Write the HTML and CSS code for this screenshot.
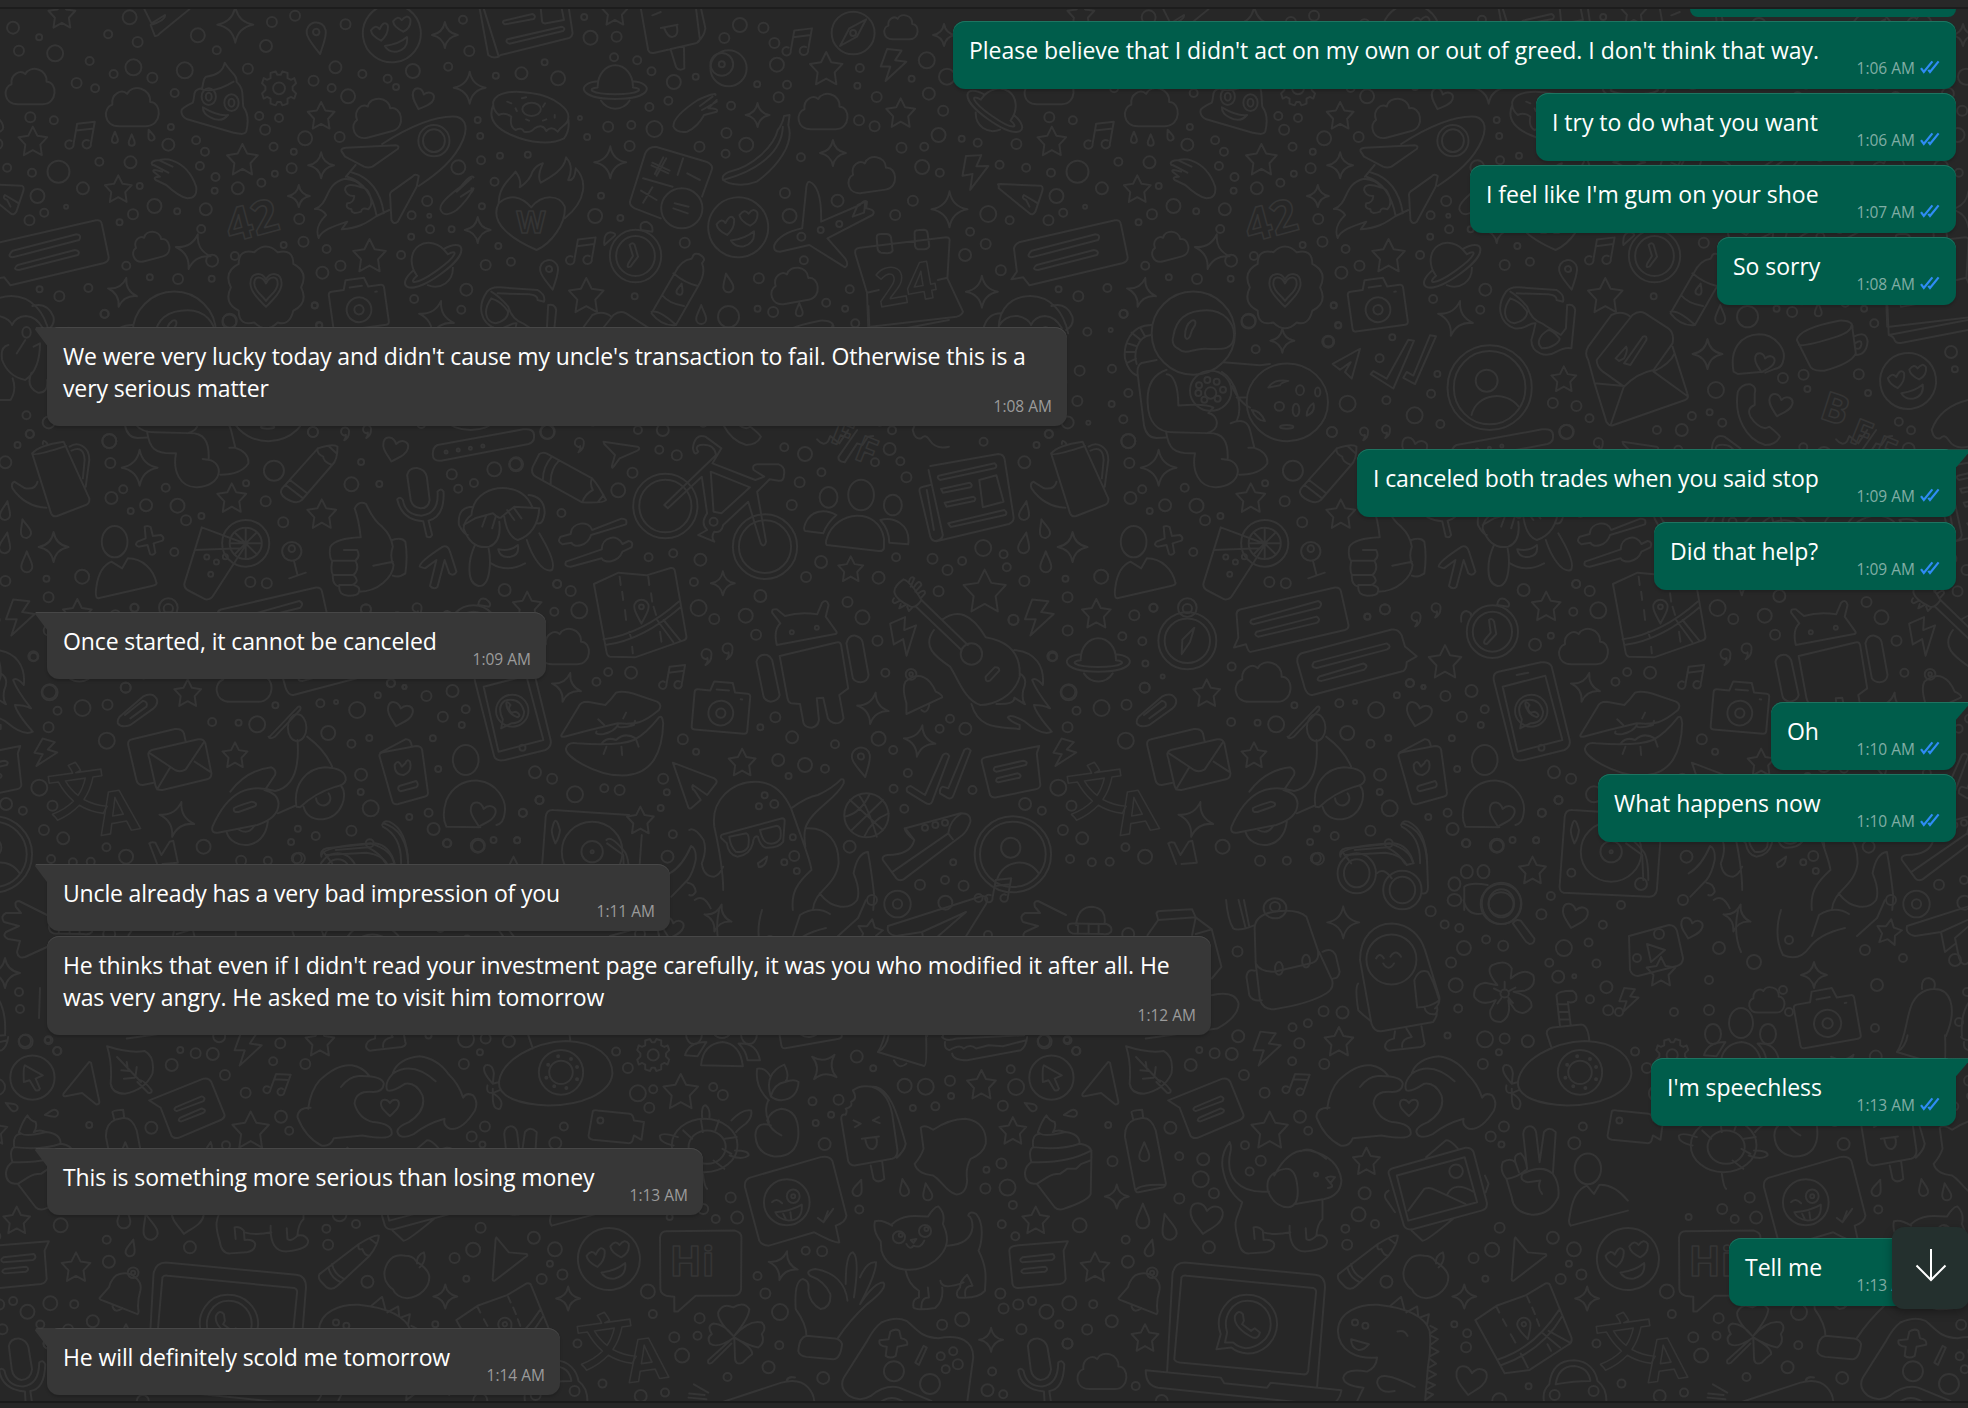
FILE: index.html
```html
<!DOCTYPE html>
<html lang="en">
<head>
    <meta charset="utf-8">
    <title>Chat</title>
    <link rel="stylesheet" href="styles.css">
</head>
<body>
    <div class="top-bar"></div>

    <main class="chat">
        <svg class="wallpaper" width="1968" height="1394" viewBox="0 9 1968 1394" aria-hidden="true">
            <defs>
                <g id="tile"></g>
            </defs>
            <use href="#tile" x="-1019"/>
            <use href="#tile" x="0"/>
            <use href="#tile" x="1019"/>
        </svg>
        <svg class="sprite" width="0" height="0" aria-hidden="true">
            <symbol id="checks" viewBox="0 0 20 14">
                <path d="M1 8.2L3.8 12L12.4 1.4M8.3 9.8L10 12L18.6 1.4"/>
            </symbol>
        </svg>

        <div class="messages">
            <div class="message out cut"><div class="bubble"></div></div>
            <div class="message out">
                <div class="bubble w1"><span class="text">Please believe that I didn't act on my own or out of greed. I don't think that way.</span><span class="meta">1:06 AM<svg class="ticks"><use href="#checks"/></svg></span></div>
            </div>
            <div class="message out">
                <div class="bubble w2"><span class="text">I try to do what you want</span><span class="meta">1:06 AM<svg class="ticks"><use href="#checks"/></svg></span></div>
            </div>
            <div class="message out">
                <div class="bubble w3"><span class="text">I feel like I'm gum on your shoe</span><span class="meta">1:07 AM<svg class="ticks"><use href="#checks"/></svg></span></div>
            </div>
            <div class="message out">
                <div class="bubble w4"><span class="text">So sorry</span><span class="meta">1:08 AM<svg class="ticks"><use href="#checks"/></svg></span></div>
            </div>
            <div class="message in first">
                <div class="bubble long w5"><span class="text">We were very lucky today and didn't cause my uncle's transaction to fail. Otherwise this is a<br>very serious matter</span><span class="meta">1:08 AM</span></div>
            </div>
            <div class="message out first">
                <div class="bubble w6"><span class="text">I canceled both trades when you said stop</span><span class="meta">1:09 AM<svg class="ticks"><use href="#checks"/></svg></span></div>
            </div>
            <div class="message out">
                <div class="bubble w7"><span class="text">Did that help?</span><span class="meta">1:09 AM<svg class="ticks"><use href="#checks"/></svg></span></div>
            </div>
            <div class="message in first">
                <div class="bubble w8"><span class="text">Once started, it cannot be canceled</span><span class="meta">1:09 AM</span></div>
            </div>
            <div class="message out first">
                <div class="bubble w9"><span class="text">Oh</span><span class="meta">1:10 AM<svg class="ticks"><use href="#checks"/></svg></span></div>
            </div>
            <div class="message out">
                <div class="bubble w10"><span class="text">What happens now</span><span class="meta">1:10 AM<svg class="ticks"><use href="#checks"/></svg></span></div>
            </div>
            <div class="message in first">
                <div class="bubble w11"><span class="text">Uncle already has a very bad impression of you</span><span class="meta">1:11 AM</span></div>
            </div>
            <div class="message in">
                <div class="bubble long w12"><span class="text">He thinks that even if I didn't read your investment page carefully, it was you who modified it after all. He<br>was very angry. He asked me to visit him tomorrow</span><span class="meta">1:12 AM</span></div>
            </div>
            <div class="message out first">
                <div class="bubble w13"><span class="text">I'm speechless</span><span class="meta">1:13 AM<svg class="ticks"><use href="#checks"/></svg></span></div>
            </div>
            <div class="message in first">
                <div class="bubble w14"><span class="text">This is something more serious than losing money</span><span class="meta">1:13 AM</span></div>
            </div>
            <div class="message out first">
                <div class="bubble w15"><span class="text">Tell me</span><span class="meta">1:13 AM<svg class="ticks"><use href="#checks"/></svg></span></div>
            </div>
            <div class="message in first">
                <div class="bubble w16"><span class="text">He will definitely scold me tomorrow</span><span class="meta">1:14 AM</span></div>
            </div>
        </div>

        <button class="scroll-down" aria-label="Scroll to bottom">
            <svg width="34" height="36" viewBox="0 0 34 36"><path d="M17 2V33M2.5 18.5L17 33L31.5 18.5"/></svg>
        </button>
    </main>

    <script src="wallpaper.js"></script>
</body>
</html>
```
FILE: styles.css
```css
* {
    box-sizing: border-box;
}

body {
    margin: 0;
    width: 1968px;
    height: 1408px;
    overflow: hidden;
    background: #272727;
    font-family: "Open Sans", "Noto Sans", sans-serif;
    color: #fff;
}

.top-bar {
    height: 9px;
    background: #282828;
    border-bottom: 2px solid #1d1d1d;
}

.chat {
    position: relative;
    height: 1394px;
    overflow: hidden;
    background: #272727;
    border-bottom: 2px solid #1b1b1b;
}

/* doodle wallpaper */
.wallpaper {
    position: absolute;
    top: 0;
    left: 0;
    fill: none;
    stroke: #353535;
    stroke-width: 2;
    stroke-linecap: round;
    stroke-linejoin: round;
}

.wallpaper path,
.wallpaper ellipse {
    vector-effect: non-scaling-stroke;
}

.wallpaper text {
    font-family: "Open Sans", "Noto Sans CJK SC", sans-serif;
    font-weight: 700;
    text-anchor: middle;
    stroke-width: 1.6;
}

.sprite {
    position: absolute;
}

/* messages */
.messages {
    position: relative;
    display: flex;
    flex-direction: column;
    padding: 0 12px 0 47px;
}

.message {
    display: flex;
    padding-bottom: 4.1px;
}

.message.first {
    margin-top: 18px;
}

.out {
    justify-content: flex-end;
}

.bubble {
    position: relative;
    display: grid;
    height: 68px;
    padding: 13px 15px 0;
    border-radius: 12px;
    background: #005d4b;
    box-shadow: inset 0 1px #1e7461, 0 2px 3px rgba(0, 0, 0, .18);
}

.in .bubble {
    height: 67px;
    margin-bottom: 1px;
    background: #373737;
    box-shadow: inset 0 1px #474747, 0 2px 3px rgba(0, 0, 0, .18);
}

.in .bubble.long {
    height: 99px;
}

.cut {
    height: 12px;
}

.cut .bubble {
    width: 266px;
    height: 8px;
    padding: 0;
    border-radius: 0 0 12px 12px;
    box-shadow: none;
}

.text {
    grid-area: 1 / 1;
    padding-left: 1px;
    font-size: 23px;
    line-height: 32px;
    letter-spacing: -.03px;
    white-space: nowrap;
}

.in .text {
    letter-spacing: -.12px;
}

.meta {
    grid-area: 1 / 1;
    display: flex;
    justify-self: end;
    margin-top: 22px;
    font-size: 15.5px;
    line-height: 24px;
    white-space: nowrap;
    color: #80aea5;
}

.in .meta {
    color: #9b9b9b;
}

.long .meta {
    margin-top: 54px;
}

.ticks {
    width: 20px;
    height: 14px;
    margin: 4px 1px 0 5px;
    fill: none;
    stroke: #2f8cf5;
    stroke-width: 2.2;
}

/* bubble tails */
.first .bubble::before {
    content: "";
    position: absolute;
    top: 0;
    width: 24px;
    height: 18px;
}

.in.first .bubble::before {
    left: -12px;
    background: linear-gradient(#474747 1px, #373737 1px);
    clip-path: polygon(1px 0, 24px 0, 24px 14px, 12px 18px, 0 2px);
}

.out.first .bubble::before {
    right: -12px;
    background: linear-gradient(#1e7461 1px, #005d4b 1px);
    clip-path: polygon(0 0, 24px 0, 24px 4px, 12px 18px, 0 14px);
}

.w15::before {
    display: none;
}

/* bubble widths */
.w1 { width: 1003px; }
.w2 { width: 420px; }
.w3 { width: 486px; }
.w4 { width: 239px; }
.w5 { width: 1020px; }
.w6 { width: 599px; }
.w7 { width: 302px; }
.w8 { width: 499px; }
.w9 { width: 185px; }
.w10 { width: 358px; }
.w11 { width: 623px; }
.w12 { width: 1164px; }
.w13 { width: 305px; }
.w14 { width: 656px; }
.w15 { width: 227px; }
.w16 { width: 513px; }

.w11 .text {
    letter-spacing: -.17px;
}

.w6 .text {
    letter-spacing: -.12px;
}

.scroll-down {
    position: absolute;
    top: 1218px;
    right: -1px;
    width: 77px;
    height: 82px;
    padding: 0 0 4px;
    border: none;
    border-radius: 12px;
    background: #24302e;
    box-shadow: 0 3px 10px rgba(0, 0, 0, .3);
}

.scroll-down path {
    fill: none;
    stroke: #fff;
    stroke-width: 2;
}
```
FILE: wallpaper.js
```js
// small doodles, drawn in a -10..10 box
const shapes = {
    star: "M0-10L3-4L9.6-3L5 2L6 9L0 5.6L-6 9L-5 2L-9.6-3L-3-4Z",
    spark: "M0-10Q1.5-1.5 10 0Q1.5 1.5 0 10Q-1.5 1.5-10 0Q-1.5-1.5 0-10Z",
    cloud: "M-5 7C-11 7-11 0-7.500-1C-8-5-4-7-2-5C0-9 7-7 6.500-2C11-2 11 7 5 7Z",
    heart: "M0 9C-4 5-9 2-9-3C-9-8-3-9 0-4C3-9 9-8 9-3C9 2 4 5 0 9Z",
    note: "M-4 6V-6L6-9V4M-4-2L6-5M-4 6A2.500 2.500 0 1 1-5.500 4.500M6 4A2.500 2.500 0 1 1 4.500 2.500",
    saturn: "M-5.500-1A5.500 6.500 0 0 1 5.500-1M-4.500 3.500A5.500 6 0 0 0 4.500 3.500M-5.500-2.500C-12-2-12 3 0 3C12 3 12-2 5.500-2.500M-5.500-.6C-9-.3-8 1.500 0 1.500C8 1.500 9-.3 5.500-.6",
    drop: "M0-10C2-4 5 0 5 4A5 5 0 0 1-5 4C-5 0-2-4 0-10Z",
    bolt: "M-4-10L5-9L1-3L8-2L-5 10L-2 1L-8 1Z",
    pin: "M0 10C-3 4-6 0-6-4A6 6 0 0 1 6-4C6 0 3 4 0 10ZM2-4A2 2 0 1 1-2-4A2 2 0 1 1 2-4",
    gear: "M-2-10L-1-8H1L2-10L5-9L5-6L7-5L9-6L10-3L8-1V1L10 3L9 6L7 5L5 6L5 9L2 10L1 8H-1L-2 10L-5 9L-5 6L-7 5L-9 6L-10 3L-8 1V-1L-10-3L-9-6L-7-5L-5-6L-5-9ZM3.500 0A3.500 3.500 0 1 1-3.500 0A3.500 3.500 0 1 1 3.500 0",
    camera: "M-8-6H-4L-3-9H3L4-6H8Q9-6 9-5V6Q9 7 8 7H-8Q-9 7-9 6V-5Q-9-6-8-6ZM4 1A4 4 0 1 1-4 1A4 4 0 1 1 4 1M1.500 1A1.500 1.500 0 1 1-1.500 1A1.500 1.500 0 1 1 1.500 1M-2-6.500H2M6-4H6.500",
    smile: "M10 0A10 10 0 1 1-10 0A10 10 0 1 1 10 0M-4 2Q-7 0-7-2Q-5-4-4-2Q-2-5-1-3Q-1 0-4 2M4 0Q1-2 1-4Q3-6 4-4Q6-6 7-4Q7-1 4 0M-3 4Q2 4 5 2Q5 6 1 6.500Q-2 6.500-3 4Z",
    quote: "M5 0A5 5 0 1 0-1 4Q1 4 1 3Q2 7-1 10Q5 7 5 0Z",
    badge: "M-3-9Q0-12 3-9Q7-10 7-6Q11-4 9 0Q11 4 7 6Q6 10 3 9Q0 12-3 9Q-7 10-7 6Q-11 4-9 0Q-11-4-7-6Q-7-10-3-9ZM0 5C-2 3-4 1-4-1C-4-4-1-4 0-2C1-4 4-4 4-1C4 1 2 3 0 5M0 3.500C-1 2-3 1-3-1C-3-3-1-3 0-1C1-3 3-3 3-1C3 1 1 2 0 3.500"
};

// at: left, top and the scale of the sheet each part was traced on
const sheets = [
    {
        at: [0, 0, 2.376, 3],
        dots: "31 83 6,93 112 3,45 152 5,131 160 8,213 183 4,257 103 4,308 52 7,327 126 5,317 202 8,270 222 4,362 233 5,182 249 5,226 265 4,72 352 5,128 361 4,439 211 8,415 279 4,406 381 3,400 434 6,466 421 4,487 455 4,475 498 4,470 106 7,515 151 4,512 531 4,510 572 3,565 565 6,621 548 4,653 521 3,693 505 5,650 440 4,698 455 3,725 415 7,630 389 5,616 348 4,663 354 4,589 206 5,646 66 5,632 138 6,701 47 5,821 73 5,797 202 6,745 242 5,788 264 4,827 289 7,861 222 4,921 236 4,941 261 3,981 213 7,1065 200 4,1115 153 5,1100 59 4,1178 227 3,1239 220 6,1326 235 7,1294 187 3,1135 360 3,1141 408 3,1188 467 3,1143 481 4,1254 464 3,1089 502 7,1175 545 4,1145 619 3,1015 603 5,978 646 4,1020 647 2,1022 688 4,1073 688 3,1184 738 3,977 710 3,953 765 4,809 797 5,766 818 6,776 747 4,721 725 5,674 735 3,711 657 5,807 411 5,1154 795 5,1214 785 4,984 897 4,1108 869 6,1096 929 4,748 916 3,546 962 7,503 836 3,558 768 4,504 782 6,423 837 5,356 832 3,300 797 4,316 643 5,367 618 7,421 634 3,489 628 6,478 687 4,284 667 3,332 558 3,310 487 6,236 485 4,197 565 6,139 515 11,76 518 4,17 503 4,89 588 7,105 638 4,157 620 2,70 661 5,94 868 3,141 889 5,210 864 4,249 941 4,758 975 3",
        marks: "star 147 45 14,star 78 425 15,star 281 568 14,star 576 480 16,star 763 348 14,star 878 768 17,spark 559 74 18,spark 1057 105 13,spark 1116 263 16,spark 763 496 13,spark 710 588 11,spark 459 755 18 15,spark 291 877 15 15,spark 1135 690 13,spark 1037 955 18 15,cloud 72 260 25,cloud 315 322 27,cloud 893 352 25 -15,cloud 357 738 19 -15,drop 273 413 6,drop 313 421 6,drop 358 406 6 -20,pin 754 115 16 -10,smile 931 100 29 -8,heart 1003 297 12 20,note 195 405 17 10,gear 663 265 17,saturn 1030 800 34 -35,camera 852 920 31 -8,badge 632 862 39",
        ovals: "496 290 17 25,496 290 7 12,550 308 17 25,550 308 7 12,1031 422 37 47,1031 422 26 34,1263 328 22 20,63 997 10 16",
        lines: [
            "M534 188C545 215 565 225 562 245C580 265 575 285 578 320C590 340 590 370 585 395C580 405 570 402 555 398L445 358C430 350 428 330 435 325C445 315 455 310 458 308C465 285 455 270 480 265C485 240 483 235 490 230C515 225 530 215 534 188ZM480 268Q510 280 555 245M482 322Q520 350 542 345Q525 370 500 352Q482 342 482 322Z",
            "M908 432C960 390 1030 345 1085 350C1110 358 1110 390 1100 420C1080 480 1040 520 995 558M812 455Q808 445 822 443L940 436Q950 437 945 447L885 500Q875 505 865 500L820 470ZM845 495L822 530M835 517Q900 540 912 640M825 530Q880 550 895 648L925 630M995 528Q985 520 980 530L930 575Q925 580 927 590L930 660Q935 675 945 665L990 560Z",
            "M895 648C870 670 850 685 812 688L825 665C790 680 765 690 757 714C750 690 755 670 775 645Q765 625 748 627C785 610 770 550 820 536Q850 540 860 560M858 562Q820 545 820 570Q825 590 842 588Q840 610 825 610Q820 625 835 628Q835 645 858 635Q860 620 875 628Q890 610 875 575Q870 565 858 562",
            "M1275 750C1220 720 1160 670 1185 610C1210 580 1240 590 1262 622C1290 580 1330 585 1342 620C1345 670 1310 730 1275 750ZM1185 610C1185 560 1210 540 1225 515Q1240 540 1235 562Q1260 540 1265 515Q1275 495 1290 490Q1275 530 1285 548C1310 530 1340 510 1345 472Q1365 500 1350 540Q1365 545 1368 505C1395 540 1395 600 1342 655",
            "M362 495Q355 482 380 480Q395 475 410 482Q450 500 466 560Q470 595 445 595Q425 590 395 555L370 540Q362 530 380 530L365 515Q360 505 385 515M380 482L410 500M365 495L400 518M1125 532Q1120 520 1095 560Q1040 610 1047 630Q1055 655 1085 630Q1110 600 1118 580Q1130 565 1120 565M1120 535L1085 575M1125 565L1095 590",
            "M1172 305C1180 275 1220 270 1265 280C1320 290 1355 330 1350 355C1350 375 1335 375 1325 395Q1310 375 1298 393Q1290 370 1270 385Q1260 400 1245 395Q1240 380 1225 390Q1210 380 1215 350Q1200 335 1185 345Q1170 330 1172 305ZM1172 315C1160 350 1170 380 1215 405C1260 430 1310 435 1340 415Q1355 390 1350 355M1205 305L1215 310M1240 295L1250 292M1295 310L1290 320M1318 345V353M1290 362L1298 358M1250 358L1257 362M1225 325L1228 333",
            "M0 727L228 661Q240 658 242 672L258 770Q260 785 245 790L25 856L10 832L-18 838L-5 815L-12 745Q-10 733 0 727ZM30 752L182 703Q195 705 188 720L30 772Q15 770 30 752ZM42 795L178 750Q192 753 185 765L45 810Q28 808 42 795Z",
            "M343 28L360 70L392 45Q395 60 358 75L368 108Q375 110 380 100L450 28M1140 28L1160 165Q1175 180 1190 165L1350 115Q1362 110 1360 95L1352 28M1150 28L1185 170M1197 62L1265 42Q1275 48 1268 57L1200 73Q1192 68 1197 62ZM1205 118L1335 80Q1345 85 1338 93L1210 131Q1200 127 1205 118ZM1285 28L1288 65Q1290 72 1298 70L1340 60L1335 28",
            "M20 1035Q0 1040 5 1080Q20 1130 60 1140Q95 1110 95 1030L80 1040M60 1020L40 1060M75 1118Q60 1160 90 1178Q115 1180 112 1140M30 1135Q40 1170 25 1200L0 1200"
        ]
    },
    {
        at: [500, 0, 2.376, 3],
        dots: "200 51 3,215 113 7,277 110 5,271 172 4,326 181 4,360 214 4,413 246 7,465 230 3,190 354 2,257 380 5,312 375 4,367 387 8,207 411 3,308 438 5,400 302 4,355 321 4,474 440 5,536 461 4,585 434 7,538 399 5,549 317 4,611 253 3,533 114 5,570 75 7,626 83 5,652 129 5,658 194 7,682 254 4,662 292 5,855 204 4,849 257 3,978 236 3,1014 181 8,1062 230 8,895 291 5,853 361 5,890 379 5,1019 281 6,1053 332 5,1042 405 7,1097 416 3,1135 428 4,1227 432 5,954 443 5,1008 440 4,1003 501 7,1045 518 4,1187 494 4,715 472 4,981 602 5,939 645 5,802 602 6,677 579 5,688 648 7,762 690 3,806 672 3,716 710 4,722 781 4,615 835 5,649 936 5,612 926 3,775 908 4,820 926 3,831 868 4,844 970 4,1105 765 6,1154 732 5,1117 695 4,1160 642 8,1211 661 4,1190 811 5,439 728 5,320 889 3,286 654 3,226 648 7,240 587 3,527 193 3",
        marks: "star 775 207 17,star 952 340 15,star 205 888 18,star 273 36 14,spark 262 487 16,spark 612 345 12,spark 791 459 13,spark 1068 628 18,spark 1145 875 16,spark 1055 105 11,cloud 953 82 17,cloud 768 335 25,cloud 882 524 24 -8,cloud 698 856 24 -10,note 711 125 17 10,note 197 752 17 10,bolt 935 195 16,bolt 1130 515 17 -10,saturn 274 268 32,saturn 1175 335 33 35,smile 566 682 30 -8,pin 119 825 15 -10,drop 428 868 6 15,drop 541 850 10 -10,drop 478 945 10,drop 711 930 7",
        ovals: "839 99 51 64,839 99 7 9,543 205 43 54,527 193 27 34,432 625 49 60,322 768 61 79,322 768 46 60,543 950 25 32",
        lines: [
            "M870 58L848 110L808 138L830 85ZM335 28L352 150Q355 162 368 158L465 130Q478 125 474 110L466 28M478 28L488 85Q485 110 470 125M405 147L418 200Q425 215 438 205L437 138M382 84L422 74M390 84Q400 115 412 110Q425 105 420 78M362 46L382 36",
            "M512 285Q515 275 470 300Q410 350 412 380Q420 400 445 395Q470 380 485 345L515 335Q520 325 495 325L515 300M505 290L475 318M515 305L480 330M675 348L688 345L685 375C700 430 660 500 610 545C580 560 545 555 530 540Q525 525 545 515C600 500 650 440 660 390Q670 375 675 348ZM672 380C670 450 620 510 530 540",
            "M370 440L490 485Q508 495 503 510L480 590M382 655L320 625Q305 615 310 600L345 460Q352 440 370 440M362 488L403 512M395 475L372 527M335 572L372 600M362 562L340 608M445 520L475 540M435 475L422 525M340 535L410 560M415 610L448 620M412 625L446 640M360 496L400 520M388 472L368 522",
            "M735 545Q765 560 763 665L855 615Q865 598 872 605L870 625Q895 630 885 645L778 715L820 775Q830 795 820 802L735 735L665 755Q648 755 652 735Q665 700 718 685L728 560Q730 545 735 545M838 650L850 615L868 605L865 638Z",
            "M845 765Q840 745 855 743L1060 712Q1070 712 1068 725L1063 835L1100 935Q1098 945 1085 950L880 980M845 765L872 878L875 980M872 878L900 870M1040 840L1063 833M895 712Q895 702 905 702L920 702Q928 704 929 712L933 752Q930 760 920 760L905 758Q898 755 897 745ZM985 698Q985 690 995 690L1008 689Q1015 690 1016 700L1020 738Q1018 747 1008 748L993 748Q987 745 986 738Z",
            "M308 735Q315 725 320 735L328 770L310 800Q300 805 305 790L316 768ZM335 690Q330 665 348 665Q365 675 362 695ZM248 735Q245 700 262 697Q278 700 272 708ZM458 770Q460 758 472 762Q485 770 485 780L480 790Q490 820 470 860L418 975Q385 980 360 940L415 820Q430 780 455 776ZM412 820Q440 850 470 858M385 885Q400 910 437 918M360 935Q380 930 418 975",
            "M1185 555Q1180 552 1190 552L1285 557Q1292 560 1288 575L1272 635Q1265 648 1258 640L1185 565ZM1275 608L1245 585Q1238 595 1250 600L1258 620M1185 985C1185 920 1220 888 1260 888C1310 888 1340 940 1350 1000M1185 978Q1200 945 1230 948Q1255 955 1262 975Q1270 950 1295 948Q1320 950 1335 985M1310 918Q1345 905 1360 950Q1365 975 1345 990M1190 940Q1160 940 1150 980"
        ]
    },
    {
        at: [289, 0, 2.373, 3],
        dots: "48 1025 6,200 1012 3,170 1075 4,307 1122 3,292 1181 4,186 1201 4,94 1211 8,253 1246 8,314 1272 4,57 1296 5,581 1209 5,637 1218 5,668 1255 4,614 1295 7,968 1170 8,1127 1134 5,1176 1124 5,1185 1167 3,1307 1123 5,1329 1179 3,1402 1265 4,1431 1291 4,911 1248 4,953 1237 3,983 1268 4,887 1290 6,828 1290 4,1526 1056 6,1535 1108 3",
        marks: "star 607 1138 13,spark 948 1062 15,heart 1082 1088 11 15,heart 1120 1215 13 15,smile 1424 1143 28 -8",
        ovals: "431 1163 100 127,431 1163 85 110,424 1142 26 33",
        lines: [
            "M470 875Q480 860 500 862L590 870Q610 885 605 905L590 900Q590 885 570 883L495 880M470 875C445 920 455 970 490 985C520 990 525 965 540 970Q535 1000 530 1020C530 1060 565 1075 590 1055Q610 1040 625 1045L634 930Q630 910 615 915L612 985L600 1005Q560 975 555 970Q530 960 520 920Q500 890 480 875M480 895C460 930 465 965 490 970Q520 960 520 935Q505 905 480 895ZM570 990C550 1005 540 1030 555 1045C580 1045 598 1025 597 1015Q580 990 570 990Z",
            "M388 1245C400 1180 470 1170 500 1220M685 1080L770 945Q785 930 800 940L855 985Q870 1000 865 1030L820 1110Q780 1120 750 1160L700 1115Q685 1100 685 1080ZM720 945Q745 930 765 950M720 945L665 1040Q655 1060 665 1080L680 1150L750 1158L718 1275M680 1150L708 1265Q715 1280 725 1275L895 1200Q905 1195 900 1180L865 1040M820 1115L900 1188M820 1115Q860 1090 870 1060M730 1075L755 1040Q760 1050 750 1075L738 1083ZM750 1090L795 1010Q805 1005 803 1020L765 1095Z",
            "M1160 1020Q1165 985 1260 962Q1295 960 1292 985L1300 1060Q1290 1090 1225 1112Q1195 1115 1190 1095ZM1165 1035Q1180 1040 1255 1010Q1290 995 1290 975M1295 1010Q1325 990 1328 1025Q1325 1065 1300 1065M1298 1030Q1315 1015 1313 1035Q1310 1050 1300 1045M1010 1115C1000 1050 1025 1005 1070 1003C1110 1003 1135 1050 1128 1080Q1125 1105 1105 1108L1085 1118M1010 1115L1020 1122L1080 1115",
            "M1020 1175Q1030 1150 1050 1153Q1065 1160 1060 1180L1060 1215Q1040 1225 1050 1250Q1065 1280 1085 1285L1095 1280Q1115 1300 1120 1310Q1110 1335 1085 1335C1040 1320 1010 1250 1020 1175ZM1566 1200Q1500 1220 1480 1290Q1485 1320 1500 1315Q1510 1300 1520 1320Q1535 1350 1566 1340M1375 918L1378 1005L1566 960M1378 1005Q1390 1010 1392 1020Q1395 1032 1410 1028L1566 990"
        ]
    },
    {
        at: [-59, 180, 3, 2.24],
        dots: "359 427 5,456 423 4,352 495 5,505 477 4,455 502 3,490 536 4,323 543 6,385 544 2,505 585 7,266 569 4,382 340 4,452 336 2,490 300 4,865 317 7,887 379 4,1105 362 5,1135 326 3,1121 281 3,523 975 5,581 958 4,487 1022 4,547 1033 4,277 1067 5,556 1083 3,608 1112 2,815 1090 4,1222 978 3,1275 962 5,323 1009 5,160 985 5,325 1147 7,554 1137 5,717 460 3,742 448 3,770 452 3,789 470 3,773 490 3,733 492 3,715 477 3",
        marks: "spark 967 360 12,star 409 972 15,bolt 238 980 18,saturn 415 1080 32,cloud 910 1125 28,star 740 1150 14,star 1455 1080 17,quote 1212 565 8,quote 1278 560 8,quote 1368 980 9,quote 1428 960 9",
        ovals: "700 343 125 93,752 472 62 45,752 477 17 13,982 498 122 87,1020 471 12 11,958 507 14 10,1008 515 10 14,980 553 20 4,1073 475 8 10,682 1032 87 64,682 1032 68 50,682 958 28 21,682 960 14 10",
        lines: [
            "M640 350C650 300 700 292 740 292C790 292 825 320 822 350C820 380 790 380 740 378C700 375 680 395 655 378Q632 370 640 350ZM675 350Q675 325 695 315Q710 312 705 325Q695 335 690 350Q680 362 675 350Z",
            "M575 325C510 325 490 370 495 400Q505 430 530 438M573 347C530 350 520 390 530 412M495 385H525M500 365L528 372M515 342L540 357M540 330L555 350M500 410L528 400M590 403L545 410Q530 415 533 435L552 550Q560 578 590 578L618 577M620 425C580 435 560 460 563 500C565 540 590 565 640 565L740 567Q775 560 770 540Q765 525 745 522L760 510Q740 500 655 505M655 505C655 460 640 435 620 435",
            "M618 563C625 600 640 615 705 612C695 650 715 690 770 688C840 685 850 640 810 628L785 625M740 567C790 565 805 585 803 625M785 430C830 450 850 510 830 540L812 545Q860 530 870 560L883 600Q925 610 922 635Q900 660 838 660M865 600L883 600M790 408L900 415L930 412M830 487L860 487M815 462Q840 500 870 510M925 465Q940 445 985 450Q960 455 960 460ZM875 515Q900 515 915 540Q890 540 875 515ZM1040 528Q1040 510 1060 500Q1068 520 1040 528Z",
            "M1118 412L1200 378L1175 445L1155 430L1172 408L1140 425ZM1240 428L1280 445L1345 358L1362 360L1300 467L1232 435ZM1340 430L1360 438L1410 348L1428 350L1365 457L1330 443ZM703 1003L690 1035L665 1062L667 1030Z",
            "M830 975Q828 965 840 962L1125 913Q1140 912 1143 922L1165 995Q1168 1005 1155 1008L872 1057Q865 1058 858 1040L822 1047L835 1025ZM875 985L1075 943Q1090 948 1078 958L880 995Q865 992 875 985ZM890 1012L1070 978Q1085 985 1070 992L895 1023Q880 1020 890 1012Z",
            "M1012 1080Q1010 1065 1025 1060L1295 1007Q1315 1005 1325 1020L1335 1045L1370 1067L1340 1080Q1340 1095 1330 1100L1060 1153Q1045 1157 1035 1140ZM1062 1080L1280 1038Q1298 1045 1280 1052L1070 1093Q1050 1092 1062 1080ZM1078 1112L1210 1083Q1228 1088 1212 1097L1085 1122Q1065 1122 1078 1112Z"
        ]
    },
    {
        at: [0, 410, 2.8, 3],
        dots: "74 16 4,84 72 4,49 105 3,306 93 7,309 159 5,15 157 6,345 238 4,312 264 6,409 286 6,366 303 3,464 233 4,497 287 7,521 331 5,564 318 3,689 220 3,744 274 5,793 337 5,767 182 10,984 223 7,1062 222 3,1011 156 3,876 66 5,1265 193 5,1283 236 4,1327 219 4,1384 178 7,1445 163 7,1532 66 7,488 426 4,230 500 7,130 506 3,136 562 5,15 513 5,701 516 5,747 520 5,376 593 4,1413 540 6,1560 522 4,139 847 8,231 894 8,161 902 4,301 884 5,352 833 5,94 740 4,136 952 5,299 992 8,110 1133 8,147 1187 5,64 1202 4,17 1182 6,123 1260 5,177 1285 6,298 1312 4,353 1340 7,143 1347 4,570 1310 7,594 936 4,668 938 3,720 943 8,771 886 3,897 880 4,941 876 2,1000 900 8,919 969 7,984 1001 4,1034 984 3,1058 856 3,1133 831 2,1094 820 4,1194 858 5,1267 843 6,1304 898 4,1240 920 5,1293 945 3,1212 985 3,1227 1077 3,1011 1094 6,1010 1146 3,1038 1195 8,1146 1221 3,1200 1208 4,1214 1257 6,1251 1300 4,1338 1307 7,1382 1290 3,1448 1291 3,1464 1208 4,1498 1087 6,1546 1106 5,1510 1170 4,984 1262 5,884 1278 4,834 1256 3,815 1296 3,837 1346 6,750 1352 4,675 1352 5,204 1357 4,254 1355 4,579 441 2.500,606 456 2.500,631 440 2.500,590 493 2.500,1249 126 1.500,1283 120 1.500,1317 115 1.500,1352 108 1.500",
        marks: "star 649 265 15,star 901 313 15,star 658 1036 13,spark 391 173 18,spark 150 411 15,spark 495 1228 18 15,heart 1105 118 14 15,heart 1118 912 14 15,drop 16 303 10 10,drop 70 357 10 -15,drop 15 400 11 10,drop 75 457 11,bolt 128 1030 14 10,heart 1350 1213 14 15",
        ovals: "321 395 36 47,688 400 66 70,688 400 45 47,817 424 27 28,817 416 9 10,832 953 26 40,1304 1050 36 45",
        lines: [
            "M90 130Q110 105 178 95L250 265Q252 280 240 285L160 318Q148 322 143 310ZM90 130Q95 140 185 108M120 102Q120 85 132 100M195 110C215 95 250 105 250 150L240 230M200 122Q235 105 237 150L232 205M105 215Q100 240 70 235L40 215Q30 220 35 235Q70 290 130 293",
            "M790 235L890 115Q935 100 945 110Q945 150 930 165L845 270Q830 285 800 265Q780 250 790 235ZM890 115Q885 130 905 140Q905 155 930 165M920 108L942 130M800 225L845 262M812 210L860 250M1225 105L1465 58Q1495 55 1495 75Q1498 95 1480 102L1235 152Q1210 155 1212 130Q1212 112 1225 105Z",
            "M1140 195Q1145 172 1168 174Q1190 178 1195 200L1203 270Q1200 295 1178 295Q1155 292 1150 270ZM1112 268Q1120 258 1128 270Q1135 315 1180 317Q1230 310 1225 245Q1235 232 1242 245Q1245 320 1200 332L1210 375Q1205 385 1195 380L1185 334Q1125 330 1112 268Z",
            "M275 565Q265 563 270 530C275 490 290 465 312 455L342 475L358 445C400 445 430 480 438 518Q440 525 425 528ZM405 350Q415 345 422 352L428 378L450 375Q462 382 455 392L430 400L435 428Q428 438 420 432L413 405L388 410Q375 405 385 395L408 385Z",
            "M565 352L690 402L598 555Q590 570 575 568L525 540Q513 530 517 518ZM545 420L675 415M688 355V445M645 400H732M658 368L718 432M718 368L658 432M823 452L833 495M810 505L856 488",
            "M1010 382Q1005 330 993 295Q1005 270 1025 282Q1045 330 1070 350Q1095 375 1100 410Q1090 440 1102 465C1100 500 1060 545 1005 545Q1005 557 975 557Q948 555 950 530Q930 525 932 495Q925 480 930 455Q920 440 925 410Q940 385 1010 382M963 420H1000Q1010 440 995 452H930M995 452Q1008 475 990 495H932M990 495Q1010 515 985 525H950M1005 545Q1010 530 990 525M1045 467L1100 455M1098 390Q1125 380 1135 395Q1142 440 1135 490Q1115 505 1100 497",
            "M1175 470Q1175 455 1240 410Q1255 405 1260 425L1278 485Q1270 500 1258 490L1245 450L1225 530Q1215 540 1204 528L1222 450L1190 475Z",
            "M1320 315C1325 250 1380 230 1420 235Q1470 240 1490 290M1320 315Q1300 330 1298 355Q1320 420 1370 410Q1405 395 1398 335M1298 345L1330 325L1380 310Q1400 330 1405 320L1440 290L1510 295Q1505 370 1450 390Q1420 380 1412 320M1325 290Q1280 290 1285 345Q1300 375 1310 375M1480 255Q1525 260 1525 310Q1520 345 1505 340M1350 350L1362 315M1378 355L1388 320M1420 300L1440 330M1440 295L1460 325M1330 405C1310 450 1305 520 1340 528C1375 530 1375 450 1368 415M1475 390C1490 440 1520 490 1545 480Q1560 460 1510 370M1375 460Q1420 490 1470 460M1395 418Q1430 425 1450 405Q1455 435 1430 440Q1400 445 1395 418Z",
            "M335 920L400 860Q425 845 438 865Q445 880 430 895L365 945Q340 955 330 940Q328 930 335 920M350 915L400 872Q415 875 410 890L365 925M360 1010Q355 990 370 988L490 957Q510 955 515 970L520 995M360 1010L382 1110Q385 1125 400 1125L430 1118M418 1045Q410 1025 425 1020L555 988Q570 985 575 1000L592 1090Q592 1105 580 1108L455 1140Q438 1142 435 1125ZM420 1030L490 1080Q505 1088 520 1078L572 995M440 1138L475 1075M588 1085L545 1055",
            "M755 980L835 890Q845 888 840 900L770 980Q755 990 752 980ZM833 990C838 1060 830 1130 770 1143M860 980Q910 1020 930 1070M770 1143C700 1120 640 1140 595 1250Q590 1270 610 1268L720 1245Q780 1225 780 1180Q778 1150 740 1140M645 1145Q690 1080 760 1072Q775 1080 770 1095L745 1135M830 1190C820 1120 860 1075 910 1072Q970 1075 968 1110Q965 1125 940 1130Q880 1150 840 1192ZM778 1210L825 1188M655 1195Q660 1190 705 1175Q722 1178 715 1188L668 1206Q652 1208 655 1195ZM635 1268C650 1320 740 1325 750 1235M670 1260Q695 1275 712 1248M850 1190Q860 1230 905 1228C960 1220 975 1150 955 1128M885 1165A20 22 0 1 0 920 1150",
            "M1063 1040Q1060 1030 1072 1027L1165 1008Q1180 1008 1182 1020L1198 1145Q1200 1158 1188 1160L1115 1182Q1100 1185 1098 1172ZM1065 1028L1135 988Q1150 985 1153 1008M1105 1065Q1105 1095 1130 1095Q1155 1085 1148 1055Q1140 1045 1135 1060L1125 1070Q1115 1045 1105 1065ZM1118 1128L1165 1113Q1175 1125 1165 1132L1122 1144Q1110 1138 1118 1128Z",
            "M1250 1250Q1235 1220 1250 1170C1270 1125 1300 1110 1340 1112C1390 1118 1420 1170 1413 1210Q1410 1240 1390 1245M1250 1250L1345 1252M900 1340Q895 1320 915 1315L1050 1300Q1090 1305 1105 1360M905 1325L930 1360M940 1320L1030 1312Q1065 1330 1080 1360M1070 1245Q1075 1230 1090 1235Q1140 1260 1143 1360M1072 1250Q1125 1280 1123 1360M418 1300L440 1362M418 1300Q425 1295 435 1298L452 1335L475 1295L485 1292L498 1358L455 1362"
        ]
    },
    {
        at: [500, 430, 2.8, 3],
        dots: "44 103 6,371 128 5,446 59 4,495 76 5,331 181 7,172 249 4,416 382 4,485 370 4,561 389 6,543 456 4,729 498 6,556 534 8,600 567 5,688 557 7,717 614 5,796 52 4,854 72 7,839 157 5,817 225 5,900 127 4,1091 57 6,1050 97 4,1121 94 4,1138 142 5,899 396 6,857 441 5,1060 443 6,1109 382 4,1211 386 5,1253 420 5,1294 393 4,1353 354 8,1410 373 4,1419 412 4,1354 35 4,1228 484 5,1438 570 5,1057 632 5,973 516 5,1015 562 7,1079 728 4,1260 866 4,1231 896 4,1303 896 6,1060 926 7,1101 960 4,938 943 4,818 922 6,771 862 5,729 892 3,512 928 5,549 965 3,779 990 6,854 1005 7,910 1016 4,808 1038 3,457 1046 5,467 1087 3,450 1134 3,484 1213 4,469 1280 6,367 728 6,303 726 4,270 755 4,160 462 4,198 483 5,222 541 8,152 545 4,210 1093 8,292 1075 4,335 1080 5,111 1111 4,64 1149 4,48 1231 3,1142 1029 4,1102 1076 4,1132 1136 4,1323 1080 4,979 1250 6,1176 1364 5,1246 1350 4,1298 1367 5,1269 1297 3,1340 1404 4,1247 1418 7,796 1297 3,831 1323 3,824 1278 5,820 1222 3,741 1096 3,768 1122 4,725 1129 3,817 607 2,887 593 2,598 275 4,1190 1193 3,1219 1185 3,1246 1178 3,258 1265 1.500",
        marks: "star 982 418 13,star 1357 485 22,star 678 998 14,star 393 1172 14,spark 624 460 12,spark 186 772 15 15,spark 1044 835 16 10,spark 1175 933 16 10,quote 222 40 9,quote 578 675 10,quote 637 658 10,bolt 1135 617 18 -30,note 487 740 15 10,camera 619 840 31 5,pin 396 545 12,pin 1014 997 15 -12",
        ovals: "463 228 90 97,463 228 73 79,742 350 90 97,742 350 73 79,1011 195 36 46,920 202 25 31,1100 225 25 31,1320 672 30 32,1151 733 15 16,1151 733 5 6,1026 1156 62 66,1436 1273 107 114,1436 1273 92 98,1430 1253 27 30,258 1265 85 90,258 1265 30 32,1113 1422 37 40,1113 1422 13 14",
        lines: [
            "M110 72Q120 65 130 70L258 145Q275 165 297 210Q290 220 230 217L100 140Q85 130 92 110ZM258 145Q250 160 260 180Q240 190 230 217M165 92Q140 120 142 160M145 80Q120 110 120 150M290 195L275 215M290 35L385 50Q395 55 385 62L335 85L318 110Q312 118 314 105L322 75L292 42Z",
            "M460 225L605 75Q600 40 560 45Q545 50 555 65Q545 80 540 55Q545 10 575 20L620 55L595 100L715 150L740 140L710 120Q705 105 720 103H780Q800 110 795 135Q795 155 780 152L755 148L720 185L745 335Q740 355 730 340L695 215L625 285Q620 310 600 305Q590 320 600 335L555 315L580 300Q560 280 580 250L565 140L470 235ZM590 125L700 172L620 250L598 245Z",
            "M915 345Q910 340 915 325C940 240 1060 230 1075 325L1075 355Q1072 365 1060 363ZM905 310L855 303Q848 300 855 280C870 240 910 235 942 255Q915 280 905 310ZM1065 270C1100 260 1150 280 1143 343L1090 338Q1090 300 1065 270Z",
            "M170 320L198 312C200 275 250 270 258 300L340 266Q358 265 353 283L255 315C245 350 205 355 200 338L175 343Q158 335 170 320ZM185 395L285 358C285 320 330 310 343 342L360 333Q375 335 368 352L343 365C330 400 290 400 285 385L198 410Q178 410 185 395Z",
            "M1205 108L1395 72Q1410 72 1413 88L1438 260Q1440 275 1425 282L1225 333Q1210 336 1205 320L1175 185Q1172 172 1185 170L1205 165M1200 120L1240 315Q1238 330 1220 333M1228 137L1385 100Q1395 108 1385 115L1232 150Q1222 143 1228 137ZM1235 177L1315 158Q1325 165 1318 172L1240 188ZM1245 218L1325 200Q1335 205 1328 213L1250 230ZM1255 280L1412 240Q1422 248 1415 255L1262 291ZM1342 150L1390 136L1410 215L1352 232ZM1195 180L1215 300",
            "M263 462L332 428L410 436L478 414Q488 412 490 425L522 620Q523 628 512 632L378 682L308 680Q300 678 298 665ZM290 628Q400 610 500 515M295 645Q400 630 507 530M440 570L485 636M458 570L505 632M335 440L338 465M342 485L345 510M350 540L353 570M362 605L367 625M370 650L372 670M415 440L418 465M423 490L426 515M430 530L437 555M448 605L452 635",
            "M775 645Q765 600 785 580L762 548Q760 535 775 538L798 558Q840 545 888 553L902 518Q915 505 920 525L912 560L942 605Q945 612 935 613ZM783 678L945 637Q952 635 955 645L975 775L950 795L962 865Q955 880 940 880Q925 878 918 865L905 803L887 805L893 870Q890 890 873 893Q855 892 850 880L840 822L815 820Q808 818 805 805ZM718 695Q725 670 748 675Q758 680 762 690L783 795Q780 812 758 815Q742 812 738 800ZM970 640Q975 615 995 617Q1012 622 1015 635L1032 735Q1030 755 1010 757Q995 757 988 745Z",
            "M1237 570C1280 535 1320 550 1360 622C1400 630 1460 650 1455 740C1440 800 1380 825 1345 825C1300 810 1280 740 1260 710C1220 680 1180 650 1215 600M1180 510L1310 645M1165 530L1292 660M1105 490Q1100 470 1130 448Q1150 455 1180 510Q1165 535 1150 530Q1110 510 1105 490ZM1145 455Q1150 435 1160 445L1150 470M1160 470Q1175 445 1180 465L1163 485M1172 490Q1190 475 1190 490L1178 505M1103 505Q1095 515 1105 520L1120 512M1122 522L1118 535L1135 525M1140 530L1145 543L1155 532M1360 740L1385 712Q1398 710 1398 722L1372 752Q1358 758 1360 740Z",
            "M1440 660C1500 665 1525 710 1520 765Q1500 740 1490 750Q1500 780 1540 835Q1520 825 1495 825Q1500 850 1545 905Q1520 920 1470 875Q1430 850 1422 862Q1430 875 1455 885L1455 897C1400 890 1340 900 1320 822M1455 730Q1480 745 1465 780Q1460 810 1470 823L1440 803Q1440 825 1390 822M1138 852L1238 802Q1240 795 1220 785C1205 745 1175 720 1135 755Q1125 775 1138 820ZM1180 840Q1195 855 1202 825",
            "M172 915L220 830Q225 815 245 815L295 825Q310 810 325 788Q345 780 385 795L440 815Q455 825 445 840C400 880 380 885 330 880Q250 900 180 920Q170 922 172 915ZM185 955Q190 935 215 940C280 945 340 945 375 930Q410 910 445 862Q455 855 457 880C455 960 430 1040 335 1036C270 1035 180 980 185 955ZM275 868L292 885M345 865L353 848M270 905Q265 915 290 912Q320 905 330 885M330 890Q345 895 375 885L378 872M285 940Q300 920 325 930Q350 905 380 925L388 950M298 950L290 972M340 950L342 975",
            "M484 998L600 1045Q610 1052 605 1060L580 1095L540 1065Q535 1075 545 1082L562 1110L535 1135Q528 1138 526 1128ZM625 1380Q625 1310 600 1190C590 1110 650 1055 715 1055C770 1055 800 1100 815 1135L850 1240Q870 1300 872 1320C830 1360 815 1390 820 1440M815 1135Q860 1100 890 1095Q930 1075 955 1048Q965 1045 962 1060C940 1110 870 1140 855 1195Q850 1215 855 1250M855 1195C920 1190 950 1240 948 1300C940 1370 880 1380 876 1440",
            "M620 1225Q615 1215 625 1213L790 1165Q798 1165 797 1175L793 1235Q780 1255 745 1253Q730 1250 722 1220Q710 1215 708 1240Q700 1275 665 1280Q640 1275 635 1240ZM642 1220L690 1210Q700 1215 695 1250Q685 1270 660 1265Q645 1250 642 1220ZM728 1200L775 1187Q790 1190 785 1225Q775 1245 750 1240Q735 1235 728 1200ZM722 1300L748 1280Q745 1310 725 1312ZM475 1330Q510 1310 535 1248Q550 1255 548 1290Q540 1330 525 1350L480 1400M530 1200Q545 1190 570 1230Q580 1260 565 1300Q570 1340 600 1340Q615 1335 625 1310M525 1358Q545 1360 548 1385Q540 1400 530 1395M545 1410Q570 1390 590 1435M1000 1410C980 1440 930 1440 895 1390M1030 1265Q1000 1270 990 1330Q1010 1380 1000 1410M1030 1265Q1040 1320 1048 1400L1045 1440",
            "M980 1110L1072 1200M1072 1110L985 1200M1005 1095Q1030 1130 1055 1220M965 1160Q1010 1150 1035 1092M1088 1150Q1040 1170 1020 1220M1150 1068L1190 1095L1240 975Q1250 965 1258 978L1210 1115Q1205 1128 1190 1118L1140 1085Q1135 1070 1150 1068ZM1240 1070L1255 1075L1300 960Q1310 950 1318 962L1270 1095Q1265 1110 1252 1103L1232 1090Q1230 1075 1240 1070Z",
            "M1350 1000Q1345 985 1360 982L1485 953L1510 948L1503 970L1513 1065Q1512 1075 1500 1078L1390 1102Q1378 1105 1372 1095ZM1385 1012L1465 992Q1480 995 1472 1005L1390 1025Q1378 1022 1385 1012ZM1392 1045L1450 1030Q1462 1035 1455 1043L1395 1057Q1385 1055 1392 1045ZM1135 1195L1290 1150Q1320 1150 1317 1175Q1310 1200 1295 1215L1130 1348Q1118 1355 1110 1345L1072 1290Q1068 1278 1085 1275Q1150 1275 1160 1230ZM1160 1230Q1135 1210 1133 1195M1100 1325L1255 1210Q1260 1170 1290 1152M1255 1210L1268 1228",
            "M1393 1345C1410 1290 1480 1280 1508 1330M118 1305L128 1160Q130 1138 150 1140L362 1155M397 1215L386 1380Q382 1400 365 1400L125 1388Q112 1385 114 1365L118 1305M150 1180Q155 1165 162 1180L168 1200Q165 1225 155 1240Q145 1215 145 1200ZM298 1230Q310 1215 345 1260Q362 1275 362 1350M300 1240L345 1275L348 1350M888 28Q905 50 918 35L925 18L950 40L975 0M1000 0L948 80Q945 95 965 97L1000 40L1015 45L1030 20L1045 18"
        ]
    },
    {
        at: [281, 430, 2.344, 3],
        dots: "158 560 3,199 538 5,551 644 6,588 617 3,258 759 4,289 771 2,566 953 3,37 1285 5,208 1240 4,390 1240 4,462 1248 6,636 1328 4,588 1398 4",
        marks: "star 577 530 15,cloud 665 650 25,star 545 1322 14",
        ovals: "451 605 60 79,451 605 46 60,542 842 38 48,133 1330 45 60,133 1330 30 42,240 1380 45 58,240 1380 30 40,362 1362 14 20,362 1410 16 18,391 1325 14 20,430 1325 14 20,472 1420 46 62,472 1420 30 42",
        lines: [
            "M443 570Q450 562 455 575L460 612L438 642Q428 642 433 630L447 608ZM462 525Q465 500 480 507Q495 520 488 530ZM378 575Q375 545 390 543Q405 550 400 555M455 755Q450 730 465 725L565 697Q585 695 590 710L632 930Q635 950 620 960L525 990Q505 995 500 980ZM475 770L575 737L615 930L510 965ZM508 735L535 728M516 895L520 868Q505 830 525 812Q560 800 570 845Q568 880 540 880Z",
            "M528 820Q530 850 555 862Q565 855 550 845L540 848Q530 835 538 825Q530 812 528 820M180 1330Q195 1310 215 1345M95 1275Q100 1250 210 1240Q260 1260 265 1300L250 1305Q240 1275 200 1268L105 1275M240 1180Q295 1200 298 1300L300 1370Q300 1395 285 1390M385 1440V1370Q400 1355 440 1365"
        ]
    },
    {
        at: [41, 900, 2.8, 2.994],
        dots: "497 154 5,191 102 6,738 333 5,791 337 6,694 369 4,651 381 4,670 429 5,650 483 4,740 491 5,499 408 6,390 449 3,433 459 5,481 461 6,366 494 6,515 524 5,573 577 5,672 649 6,695 691 4,518 734 4,562 781 5,531 813 4,401 776 6,394 836 8,431 878 5,334 767 4,334 894 5,309 682 6,135 674 3,147 782 5,55 974 7,184 1017 4,417 1040 6,190 1083 6,26 1207 7,93 1210 4,76 1286 5,145 1261 6,21 1328 5,212 1455 4,285 1500 6,853 878 6,836 941 7,799 984 4,882 970 4,804 1032 5,914 1143 6,1158 1072 5,1210 1047 7,1191 1134 3,1231 981 5,1380 1011 6,1439 1046 7,1425 1089 3,1460 1121 5,1402 1135 5,1104 1270 3,1140 1297 4,1137 1339 5,1502 1328 4,1312 1456 3,1230 1498 7,1206 708 5,1243 678 5,1236 732 3,1440 728 6,1464 678 4,1184 491 5,1229 456 3,1190 417 8,1245 415 5,1310 423 6,1115 325 4,1085 406 3,1108 255 7,1095 187 5,1131 144 7,1193 118 4,1241 137 5,1077 73 4,1118 84 4,1038 34 5,1348 43 5,1411 144 8,1480 127 4,1370 188 4,1395 230 6,1440 228 2,1502 190 4,1484 297 4,1535 330 5,1530 261 6,1520 74 4,21 420 4,46 452 4,826 1265 3,855 1275 3,717 822 2,1385 1482 5,1494 1470 5,1448 468 1,1484 476 1,1501 500 1,1501 537 1,1471 563 1,1437 558 1,1415 532 1,1420 493 1",
        marks: "star 781 425 15,star 587 690 19,star 858 783 14,star 98 1100 15,star 238 1312 14,spark 793 67 16,spark 159 888 12,spark 1132 1187 12,spark 1476 1193 12,drop 232 948 13,drop 303 980 14 -15,drop 252 1043 9 15,heart 408 952 18 10,heart 977 620 10,heart 1150 1437 17 10,heart 1440 47 14 15,bolt 580 445 17,note 665 550 14 20,pin 1302 1283 11 -15,cloud 118 1412 25,drop 236 755 10",
        ovals: "613 205 11 19,689 183 11 19,602 20 14 14,602 25 32 30,928 178 70 75,1235 12 57 60,1235 12 35 35,1245 280 12 12,1456 516 62 67,1456 516 33 35,1109 812 19 20,1478 805 37 46,258 1116 15 16,258 1116 6 6",
        lines: [
            "M545 85Q545 45 600 35Q665 25 690 50L722 150Q728 185 700 190L600 215Q560 215 548 190ZM548 190L560 300Q570 330 600 327Q700 310 745 280Q768 265 762 240L725 155M545 212Q525 205 522 230L530 285Q540 305 565 300M735 155Q760 140 772 165L783 215Q780 235 765 235M465 0Q470 60 485 85Q500 95 545 75M500 0L520 85M515 0L530 80",
            "M245 105L275 60L270 40Q272 33 280 33L370 28L380 52L425 88L452 200L425 235M275 60L380 52L370 105M380 102L425 88M45 75Q50 20 90 20Q130 25 125 70M22 80Q22 70 35 70L130 72Q148 80 143 95Q135 105 120 102L35 100Q22 95 22 80ZM50 75V98M80 72V100M108 75V102M425 285Q490 270 500 310Q500 350 440 385L240 415",
            "M872 370L840 180C840 110 880 70 930 70C980 72 1010 110 1022 150L1062 290Q1065 310 1050 325M872 370Q880 395 900 393L1045 365Q1055 350 1055 340M1000 320L992 240Q1005 205 1030 215Q1045 240 1062 300Q1040 320 1000 322ZM835 250Q825 260 835 330L850 345L870 362M938 393L935 415Q910 420 910 440Q915 455 930 450L1010 440Q1025 435 1020 425L1012 378M958 440Q955 415 985 410L970 385M885 175Q895 155 907 175M925 170Q940 145 955 170M905 190Q920 215 935 190M1020 320Q1025 345 1050 342Q1060 335 1055 320",
            "M1268 70Q1275 55 1290 62L1328 115Q1330 130 1315 132L1305 125ZM1130 0Q1140 50 1185 40M1225 255Q1190 210 1210 195Q1250 175 1265 205L1262 235Q1300 200 1325 225Q1335 260 1300 272L1270 275Q1325 290 1320 320Q1300 350 1275 330L1255 300Q1265 350 1235 365Q1200 365 1205 330L1220 300Q1180 320 1160 290Q1155 255 1190 248L1225 255ZM1245 245V265M1215 265L1235 275M1275 262L1257 273M1225 310L1237 292M1268 308L1255 292",
            "M1377 445L1363 400Q1362 385 1380 382L1460 373Q1478 375 1482 420M1400 378L1390 285Q1395 272 1435 272Q1450 280 1445 300Q1435 310 1422 305L1430 375M1392 312H1420M1395 335H1424M1398 358H1427M1282 545C1290 480 1380 425 1470 422C1560 425 1600 470 1600 520C1595 580 1510 615 1420 615C1340 612 1280 590 1282 545ZM1265 550Q1230 510 1245 495Q1265 490 1268 520L1265 550M1265 578Q1300 600 1285 625Q1265 630 1265 590V565M1250 555Q1245 580 1265 578L1283 570M1265 550L1283 545",
            "M748 625Q755 570 780 540Q830 490 870 495Q900 500 918 525M840 560Q860 530 890 527Q955 525 960 550Q958 575 930 575Q880 570 878 610Q890 655 930 665Q985 670 982 700Q975 720 900 705L820 713Q810 740 785 735Q740 710 718 650Q720 620 755 622M985 518Q1000 475 1060 468Q1110 475 1140 520Q1170 550 1182 592Q1190 575 1210 585Q1225 605 1215 630Q1180 690 1145 685Q1125 675 1130 655Q1080 670 1045 700Q1005 720 998 695Q995 680 1030 665Q1080 630 1068 585Q1050 545 1020 550Q985 575 970 570Q960 550 985 520Q1040 480 1105 543",
            "M185 438Q250 460 290 452Q320 470 312 520Q290 570 235 580Q200 580 195 550Q200 490 185 438ZM213 470L280 545M225 510L248 512M232 535L262 532M240 485L243 505M268 500L265 525M275 540Q285 535 310 570Q310 580 300 577L270 545M135 485L63 580Q60 590 72 587L115 578L155 612Q165 612 163 602L140 487Z",
            "M303 600L455 535Q470 532 477 545L513 640Q517 650 505 658L385 712Q370 715 365 705L335 622ZM378 620L450 588Q462 592 455 602L380 632Q368 628 378 620ZM390 652L450 624Q465 628 455 637L393 663Q380 662 390 652ZM210 657Q180 670 182 710L210 865Q212 877 220 875L290 860Q298 855 296 845L268 690Q255 650 230 653ZM205 657L200 635Q200 630 230 628L233 652M212 868Q225 850 295 853",
            "M475 725Q450 760 455 800Q465 870 510 905C500 950 480 950 500 1020Q505 1060 530 1058L575 1055Q600 1050 600 1030Q595 1015 570 1018L568 990Q555 975 542 980L545 1015M475 725Q480 735 478 750C460 830 500 880 585 873M600 825Q640 740 700 750Q780 770 788 840Q785 885 740 895L660 910M605 815Q575 830 582 870Q600 920 640 920Q670 915 665 860Q660 800 630 805Q615 807 605 815ZM675 752Q700 735 745 775M570 995Q600 1005 645 995M643 975Q640 1055 690 1052Q750 1045 748 1020Q740 1000 718 1005Q720 970 735 955L735 900M688 983L690 1015Q700 1025 718 1005M745 832Q755 825 770 830L757 848ZM757 848Q770 860 750 862",
            "M922 825Q915 808 932 803L1135 742Q1152 740 1158 755L1195 905Q1198 925 1180 930L990 985Q970 990 963 975ZM943 825L1133 770L1168 905L975 960ZM975 930L1020 865Q1035 858 1050 868L1135 910M1085 880Q1105 840 1160 875M1025 770L1080 720Q1090 715 1115 745M1190 825L1200 850L1192 875M920 870Q905 880 912 895L938 935M985 990L1015 1020Q1025 1022 1100 955",
            "M1250 835Q1230 810 1240 785Q1260 770 1275 785Q1270 760 1290 758Q1305 775 1308 805L1297 700Q1300 675 1320 678Q1330 682 1333 695L1343 785L1355 695Q1370 675 1388 695L1380 820Q1400 850 1395 890Q1370 945 1320 942Q1270 935 1265 890ZM1275 785L1285 815M1308 805Q1285 830 1250 835M1310 845Q1285 840 1295 820Q1350 790 1380 820M1310 845L1345 840Q1335 860 1350 880M1590 930L1430 975Q1425 970 1425 960L1430 930Q1440 870 1475 855L1495 880L1510 853Q1550 850 1590 900",
            "M300 1410L315 1120Q320 1085 350 1085L715 1122Q742 1125 742 1160L720 1455M320 1375L340 1130Q345 1122 355 1125L710 1162Q718 1165 717 1175L695 1410Q692 1422 680 1420L335 1385Q322 1382 320 1375ZM240 1408L450 1430L460 1447L580 1460L590 1445L788 1468Q785 1490 770 1505M240 1408Q240 1455 275 1460L680 1505",
            "M438 1345L450 1300C430 1240 470 1180 525 1182C570 1182 608 1220 608 1270C605 1330 560 1358 525 1358Q495 1355 480 1340ZM462 1325L468 1295C455 1250 480 1200 525 1200C570 1200 590 1240 590 1270C590 1315 550 1342 520 1342Q500 1340 485 1325ZM490 1245Q500 1225 512 1240L515 1260L510 1270L535 1290L545 1282L560 1295Q555 1315 540 1310C510 1295 485 1270 490 1245Z",
            "M780 1120L890 1030Q935 1000 946 1005Q945 1030 920 1065L830 1155Q815 1170 800 1160L782 1140Q775 1130 780 1120ZM890 1030Q885 1050 900 1045Q905 1065 920 1065M805 1100Q810 1130 840 1145M815 1090Q820 1120 850 1135M922 1015L940 1030M1020 1065C970 1055 955 1110 965 1140Q975 1160 985 1165Q995 1190 1025 1192C1060 1190 1090 1160 1087 1125C1080 1095 1055 1090 1050 1080Q1040 1065 1020 1065ZM1053 1088Q1050 1065 1072 1055Q1080 1080 1060 1100M1275 1010L1310 1055L1360 1060Q1365 1065 1355 1070L1270 1140Q1263 1142 1265 1130L1273 1015Z",
            "M888 1370C830 1375 780 1350 778 1290C780 1230 840 1210 890 1212C960 1220 1020 1240 1035 1290Q1040 1340 1030 1400L1022 1505M888 1370Q885 1400 860 1412Q800 1400 793 1430Q795 1455 850 1460L830 1505M925 1215L955 1188L965 1228M970 1235L1000 1217L1003 1245M1008 1250L1033 1240L1028 1270M1037 1275L1055 1285L1038 1297M1040 1305L1058 1315L1040 1330M1040 1340L1060 1352L1038 1365M1037 1375L1053 1388L1033 1400M1032 1408L1053 1420L1028 1435M1030 1443L1050 1452L1028 1465M1028 1473L1045 1480L1025 1495M945 1292Q965 1285 973 1305M993 1458Q890 1400 888 1445Q895 1480 937 1470M815 1315L865 1330Q850 1350 835 1347Q815 1340 815 1315Z",
            "M1163 1258L1222 1215L1305 1183L1360 1148Q1370 1145 1373 1155L1432 1310Q1435 1325 1425 1330L1315 1407L1245 1417ZM1228 1375Q1330 1340 1397 1228M1235 1393Q1350 1350 1405 1248M1352 1297L1400 1340M1368 1290L1428 1325M1222 1218L1230 1235M1240 1255L1250 1275M1262 1300L1275 1325M1290 1358L1310 1400M1308 1188L1315 1205M1322 1220L1330 1240M1335 1255L1342 1275M1365 1330L1375 1350",
            "M165 1190Q160 1195 175 1200L270 1240Q275 1235 272 1225Q270 1200 278 1170C285 1140 255 1110 220 1120Q200 1125 190 1160ZM200 1215Q205 1240 228 1222M1355 1500Q1350 1470 1370 1450C1375 1400 1400 1378 1440 1378C1480 1380 1500 1410 1505 1440Q1530 1460 1530 1500M1388 1450Q1395 1395 1440 1395Q1480 1400 1485 1440Q1440 1440 1388 1450Z"
        ]
    },
    {
        at: [560, 920, 2.8, 2.994],
        dots: "157 394 4,190 443 5,218 519 8,261 507 4,250 562 5,429 500 4,456 524 5,707 543 4,780 538 5,831 409 6,877 444 3,759 583 3,716 608 3,741 671 6,965 496 7,1024 499 8,1092 481 5,1095 527 3,1051 558 4,988 563 3,1262 447 4,1277 500 8,1240 556 5,1194 748 3,1236 729 5,1191 804 5,1253 801 8,1268 853 4,1237 911 4,1275 947 4,838 867 4,478 831 5,401 865 5,436 895 4,496 891 6,307 889 3,688 990 4,734 992 5,553 1066 4,575 1118 5,616 1174 8,260 1180 4,246 1112 7,391 1192 5,385 1245 4,320 1249 5,342 1304 7,614 1273 4,469 1368 4,584 1339 6,737 1371 6,1242 1163 5,1283 1151 5,1322 1141 4,1362 1173 7,1233 1118 5,1126 1196 7,1070 1212 5,1292 1225 5,1398 1211 4,1421 1269 5,1210 1352 4,1197 1408 6,1241 1420 4,119 1388 4,294 1415 4,226 1425 6,935 1351 10,1036 1389 10,1066 1306 4,1101 1291 4,1080 1345 4,1114 1330 5,1357 364 7,113 600 3,653 827 2,954 943 2,1026 925 2",
        marks: "star 338 515 18,star 1180 494 15,star 1268 632 14,star 1332 900 14,spark 740 440 16 40,spark 625 1035 15 15,spark 1207 1257 12,gear 261 404 16,drop 835 803 9 20,drop 963 802 9 -10,drop 1028 815 9 -10,drop 1318 558 7 -60,drop 1430 580 7 -100,smile 137 1015 31 -8",
        ovals: "1376 472 62 66,405 675 92 80,412 680 52 50,635 845 64 69,653 827 18 20,949 950 17 18,1022 931 17 18",
        lines: [
            "M1355 435Q1350 440 1352 485L1368 480L1385 510Q1395 512 1397 505L1385 475L1405 465ZM1335 790Q1300 790 1302 755Q1305 735 1320 725Q1310 690 1325 680Q1320 640 1345 640L1338 635Q1350 600 1362 585Q1370 600 1385 605Q1390 620 1380 635Q1395 625 1415 635Q1455 640 1455 670Q1490 675 1488 700L1486 820Q1480 840 1410 865Q1395 870 1385 860ZM1335 790Q1350 780 1365 770Q1380 760 1400 760L1420 745L1445 745L1460 730L1485 720M1345 640Q1360 650 1415 635M1325 680Q1400 690 1455 670M1320 725Q1420 730 1488 690",
            "M92 572Q95 568 105 570L195 580Q205 582 207 600L235 605L228 658L207 645L203 660Q200 670 188 668L92 658Q80 655 80 645ZM318 675Q275 665 280 645Q290 635 330 650M398 592Q395 555 408 555Q422 565 418 595M480 600Q510 565 535 570Q540 590 520 610Q500 625 493 635M490 690Q530 690 528 705Q510 720 475 705M345 630L370 655M395 600L400 635M445 600L435 630M495 650L462 655M480 700L455 685M460 745L430 720M400 760Q405 800 412 805",
            "M590 615Q550 600 547 645Q550 700 600 708Q660 710 667 650Q672 570 620 565Q590 570 580 600Q590 630 620 645M585 540Q545 500 552 445Q575 440 590 470Q600 445 628 433Q645 470 630 485Q655 475 668 485Q665 535 620 540Q605 540 590 528Q580 490 590 470M590 528Q600 490 630 485M583 540Q570 570 585 605",
            "M820 510Q840 495 860 498C900 500 920 530 930 580L945 690Q945 710 930 715L825 735Q812 735 807 722L788 600Q785 580 800 583Q805 570 800 565Q820 560 815 545Q835 535 820 510ZM860 498L885 500C920 510 940 560 968 670Q965 690 943 712M870 735L878 775Q890 790 908 775L902 722M845 655L893 648M855 657Q860 690 878 685Q892 675 885 650M822 600L842 610L826 620M893 590L876 600L895 608",
            "M1010 622Q1020 610 1045 628C1070 610 1100 595 1135 595C1180 600 1195 635 1192 670Q1185 700 1150 715Q1135 740 1140 780Q1138 820 1110 822C1080 815 1070 780 1045 765Q1000 760 993 730Q1010 710 1018 685ZM518 800Q515 780 530 772L730 710Q755 705 763 722L802 885Q800 905 772 915L782 965Q770 968 712 935L585 975Q565 975 558 960ZM594 845Q605 830 622 848M603 875Q650 870 677 852Q680 900 640 900Q610 895 603 875ZM625 880L632 895M645 875L648 898M722 892L738 905L765 865M738 905L750 872",
            "M930 910C960 880 1000 885 1030 888Q1050 855 1060 858Q1080 880 1072 910C1090 950 1090 985 1050 1020C1000 1060 920 1060 900 990L898 962Q875 930 882 902Q900 895 930 915M1085 975Q1150 970 1155 920Q1155 890 1143 885Q1145 870 1165 880C1190 910 1180 970 1172 990C1200 1050 1190 1080 1190 1110Q1170 1135 1115 1130Q1105 1115 1120 1100Q1120 1080 1140 1062Q1150 1080 1155 1095Q1130 1095 1135 1125M968 1050Q975 1090 1005 1110L1005 1130Q985 1135 990 1160Q1000 1170 1050 1162Q1075 1140 1070 1100M1030 1100L1033 1130Q1010 1130 1012 1162M1065 1080Q1070 1110 1130 1085M970 970Q980 990 990 975Q1010 985 1020 960M982 958L998 955L990 967Z",
            "M1258 990Q1258 978 1275 975L1422 962L1410 990L1416 1075Q1412 1088 1400 1090L1285 1102Q1270 1103 1267 1090ZM1295 1010L1380 1000Q1390 1010 1378 1018L1295 1025Q1282 1018 1295 1010ZM1298 1045L1358 1038Q1370 1045 1358 1053L1298 1058Q1285 1052 1298 1045ZM280 950Q282 932 298 932L490 930Q508 935 508 950L507 1105Q505 1122 490 1124L380 1125L330 1172L320 1172L320 1128L300 1126Q282 1120 281 1105Z",
            "M485 1245Q440 1200 443 1175Q455 1145 485 1160Q515 1140 530 1165Q530 1190 488 1245Q530 1195 565 1205Q580 1220 565 1240Q575 1265 555 1280Q530 1275 488 1250Q540 1280 538 1300Q525 1310 512 1325Q490 1335 490 1310L488 1250Q440 1285 420 1268Q410 1250 425 1240Q410 1215 430 1208Q460 1210 485 1245ZM480 1255L415 1318Q412 1332 425 1326L480 1268",
            "M690 1245Q690 1210 660 1165Q655 1080 680 1075Q700 1080 695 1110Q700 1150 730 1165Q760 1160 757 1120Q740 1080 700 1065Q685 1050 715 1045C770 1055 800 1090 805 1140M800 1090Q800 1000 820 995Q840 1010 823 1130M840 1070Q860 1020 885 1025Q885 1060 840 1150Q880 1085 905 1085Q920 1100 860 1150Q810 1200 778 1252M690 1245Q670 1250 667 1290Q670 1305 690 1308L765 1315Q785 1315 790 1270Q785 1255 770 1253Z",
            "M900 1205Q940 1185 970 1200C1000 1225 1010 1250 1060 1252C1120 1240 1158 1260 1157 1310L1140 1445M900 1205Q880 1220 860 1260L795 1370Q780 1400 810 1425Q840 1445 870 1425Q910 1390 950 1400L1040 1440M925 1232Q940 1222 950 1230L955 1252Q975 1255 972 1272L945 1278L940 1305Q925 1315 912 1305L915 1278Q890 1275 895 1258L920 1255ZM995 1325L1018 1275L1027 1280L1005 1332ZM890 1450Q925 1415 965 1445",
            "M1310 1275Q1315 1252 1338 1253Q1360 1258 1365 1280L1375 1345Q1372 1375 1345 1377Q1322 1372 1318 1345ZM1283 1348Q1290 1338 1298 1350Q1305 1395 1350 1397Q1395 1390 1395 1325Q1405 1315 1412 1330Q1410 1405 1370 1410L1375 1445M1355 1412L1357 1445M1283 1348Q1290 1405 1355 1412M450 1445L620 1385Q670 1370 695 1400Q712 1420 712 1445M635 1378Q640 1365 658 1370M360 1430L410 1435M362 1418L405 1422M375 1390L415 1415",
            "M395 435Q400 370 455 365Q505 370 512 438ZM350 405Q360 365 410 365L385 408ZM500 370Q550 365 560 420L525 420Q520 390 500 370ZM890 395L1020 437Q1028 435 1025 345M890 395Q915 380 920 345M935 420Q950 450 970 430M1070 350Q1080 365 1110 355L1300 345M1078 365Q1075 385 1090 390Q1120 370 1130 385Q1150 370 1165 385L1200 375L1240 378L1305 360M1098 400Q1100 420 1140 420L1290 390Q1305 380 1308 350"
        ]
    },
    {
        at: [0, 0, 1, 1],
        dots: "602 905 4,622 884 6,640 934 5,618 958 4,664 900 5,700 948 6,690 980 4,735 962 7,764 990 4,770 940 4,846 950 5,858 985 6,872 900 5,884 958 4,936 960 6,948 992 4,1003 955 5,988 935 4,655 1012 4,690 1010 5,770 1012 4,856 1028 4,940 1022 4,600 1012 4,19 992 4,20 1009 4,25 1041 6,48 1040 3,57 1051 4",
        marks: "star 642 972 15,star 870 932 13 10,spark 718 918 14 15,spark 795 975 13,note 1000 890 15 10,heart 672 928 12 15,camera 808 1020 34 -10,bolt 610 1000 12,spark 5 973 15,cloud 748 1000 18",
        ovals: "722 1023 12 15,694 1034 8 10,749 1034 8 10",
        lines: [
            "M719 910Q714 934 722 952M762 910Q754 936 764 955Q780 962 790 948Q800 934 826 928M793 936L800 915Q816 905 830 914M838 936L858 918L866 900",
            "M888 926L982 896Q990 896 986 904L950 962Q944 968 940 958L936 938L966 912L922 932L896 936Q886 934 888 926ZM922 932L926 952L936 944",
            "M878 1052C892 1030 884 998 908 990C934 984 938 1010 927 1036M903 989Q902 978 910 978Q918 980 915 989M943 1036C940 1000 960 986 988 984C1014 984 1026 1004 1024 1035M966 1004L972 1002M984 998L990 999M1000 1008L1006 1012M956 1018L962 1016",
            "M610 936L650 925Q656 925 658 931L664 958Q664 964 658 966L619 976Q613 976 611 970ZM628 944L646 950L632 962Z",
            "M47 915L19 901Q14 901 16 907L21 913L6 913Q0 916 4 922L19 926L6 932Q2 936 8 939L20 941L17 952Q18 959 25 957L47 947M40 988L39 1018"
        ]
    }
];

// lettering: text, x, y, size, angle
const letters = [
    ["42", 256, 236, 46, -15],
    ["W", 531, 233, 30, 0],
    ["24", 909, 302, 52, -10],
    ["B", 812, 422, 40, 18],
    ["F", 838, 445, 36, 22],
    ["F", 862, 462, 36, 22],
    ["\u6587", 80, 812, 58, -8],
    ["A", 121, 832, 58, -10],
    ["Hi", 692, 1276, 42, 0],
    ["\u6587", 609, 1362, 58, -8],
    ["A", 649, 1380, 58, -8]
];

function draw(sheet) {
    const [left, top, sx, sy] = sheet.at;
    let out = "";
    sheet.dots.split(",").forEach(dot => {
        const [x, y, r] = dot.split(" ").map(Number);
        out += `<ellipse cx="${left + x / sx}" cy="${top + y / sy}" rx="${r}" ry="${r}"/>`;
    });
    sheet.marks.split(",").forEach(mark => {
        const [name, x, y, size, turn] = mark.split(" ");
        out += `<path d="${shapes[name]}" transform="translate(${left + x / sx} ${top + y / sy}) rotate(${turn || 0}) scale(${size / 10})"/>`;
    });
    sheet.ovals.split(",").forEach(oval => {
        const [x, y, rx, ry] = oval.split(" ").map(Number);
        out += `<ellipse cx="${left + x / sx}" cy="${top + y / sy}" rx="${rx / sx}" ry="${ry / sy}"/>`;
    });
    out += `<path d="${sheet.lines.join("")}" transform="translate(${left} ${top}) scale(${1 / sx} ${1 / sy})"/>`;
    return out;
}

const words = letters.map(([text, x, y, size, turn]) =>
    `<text font-size="${size}" transform="translate(${x} ${y}) rotate(${turn})">${text}</text>`);

document.getElementById("tile").innerHTML = sheets.map(draw).join("") + words.join("");
```
